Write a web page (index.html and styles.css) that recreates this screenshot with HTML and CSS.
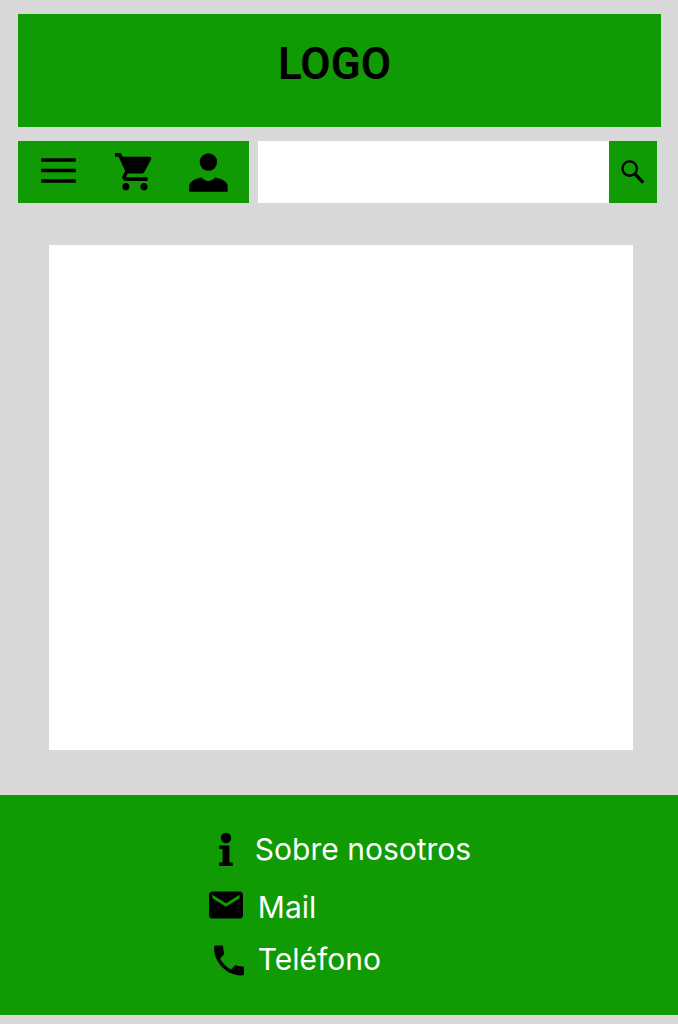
FILE: index.html
```html
<!DOCTYPE html>
<html lang="es">
<head>
<meta charset="utf-8">
<meta name="viewport" content="width=device-width, initial-scale=1">
<title>Inicio</title>
<link rel="stylesheet" href="styles.css">
</head>
<body>
<header class="header">
  <h1 class="banner">LOGO</h1>
  <div class="toolbar">
    <nav class="nav">
      <button class="icon-button" type="button" aria-label="Menú">
        <svg class="icon" viewBox="0 0 40 40"><path d="M3.200 5.200h34.600v3.600H3.200zM3.200 15.700h34.600v3.600H3.200zM3.200 26.200h34.600v3.600H3.200z"/></svg>
      </button>
      <button class="icon-button" type="button" aria-label="Carrito">
        <svg class="icon icon-cart" viewBox="1 2 20.400 19.800" preserveAspectRatio="none"><path d="M7 18c-1.100 0-1.990.9-1.990 2S5.900 22 7 22s2-.9 2-2-.9-2-2-2zM1 2v2h2l3.600 7.590-1.350 2.450c-.16.28-.25.61-.25.96 0 1.100.9 2 2 2h12v-2H7.420c-.14 0-.25-.11-.25-.25l.03-.12.9-1.630h7.450c.75 0 1.410-.41 1.750-1.030l3.580-6.490A1 1 0 0 0 20 4H5.210l-.94-2H1zm16 16c-1.100 0-1.990.9-1.990 2s.89 2 1.990 2 2-.9 2-2-.9-2-2-2z"/></svg>
      </button>
      <button class="icon-button" type="button" aria-label="Cuenta">
        <svg class="icon" viewBox="0.600 0 40 40"><circle cx="20" cy="9" r="8.700"/><path d="M.8 38.800v-6c0-4 6-7 12.400-8.200 2 2.200 4.200 3.400 6.800 3.400s4.800-1.200 6.800-3.400c6.400 1.200 12.400 4.200 12.400 8.200v6z"/></svg>
      </button>
    </nav>
    <form class="search" role="search">
      <input class="search-input" type="search" aria-label="Buscar">
      <button class="search-button" type="button" aria-label="Buscar">
        <svg class="search-icon" viewBox="0 0 32 32"><circle cx="12.700" cy="12.600" r="7.200" stroke-width="2.400"/><path d="M17.600 17.600l8.700 9" stroke-width="3.400"/></svg>
      </button>
    </form>
  </div>
</header>
<main class="content"></main>
<footer class="footer">
  <ul class="links">
    <li><a class="link" href="#nosotros">
      <svg class="link-icon" viewBox="0 0 34 34"><circle cx="17" cy="6" r="5.200"/><path d="M10.200 13.600h9.200q1 0 1 1v16h3.400v3.400H10.200v-3.400h3.400V17h-3.400z"/></svg>
      Sobre nosotros</a></li>
    <li><a class="link link-mail" href="#mail">
      <svg class="link-icon" viewBox="2 2 20 20"><path d="M20 4H4c-1.100 0-1.990.9-1.990 2L2 18c0 1.100.9 2 2 2h16c1.100 0 2-.9 2-2V6c0-1.100-.9-2-2-2zm0 4l-8 5-8-5V6l8 5 8-5v2z"/></svg>
      Mail</a></li>
    <li><a class="link link-phone" href="#telefono">
      <svg class="link-icon" viewBox="0 1.500 20.400 20.400"><path d="M6.620 10.790c1.440 2.830 3.760 5.140 6.590 6.590l2.200-2.200c.27-.27.67-.36 1.020-.24 1.120.37 2.330.57 3.570.57.55 0 1 .45 1 1V20c0 .55-.45 1-1 1-9.390 0-17-7.610-17-17 0-.55.45-1 1-1h3.500c.55 0 1 .45 1 1 0 1.250.2 2.450.57 3.570.11.35.03.74-.25 1.020l-2.200 2.200z"/></svg>
      Teléfono</a></li>
  </ul>
</footer>
</body>
</html>
```
FILE: styles.css
```css
* { box-sizing: border-box; }

body {
  margin: 0;
  background: #d9d9d9;
  color: #000;
  font-family: Inter, "Liberation Sans", sans-serif;
}

svg {
  display: block;
  fill: currentColor;
  overflow: visible;
}

button {
  border: 0;
  padding: 0;
  background: none;
  color: inherit;
  cursor: pointer;
}

.header { padding: 14px 17px 0 18px; }

.banner {
  display: flex;
  align-items: center;
  justify-content: center;
  min-height: 113px;
  margin: 0;
  padding: 0 10px 14px 0;
  background: #109a04;
  font-family: Roboto, "Liberation Sans", sans-serif;
  font-size: 44px;
  font-weight: 600;
}

.toolbar {
  display: flex;
  gap: 9px;
  margin: 14px 4px 0 0;
}

.nav {
  display: flex;
  flex: none;
  align-items: flex-start;
  gap: 37px;
  padding: 12px 20px 10px;
  background: #109a04;
}

.icon {
  width: 40px;
  height: 40px;
}

.icon-cart {
  width: 37px;
  height: 37px;
}

.search {
  display: flex;
  flex: 1;
  min-width: 0;
}

.search-input {
  flex: 1;
  min-width: 0;
  padding: 0 16px;
  border: 0;
  border-radius: 0;
  background: #fff;
  font: 24px Inter, sans-serif;
  appearance: none;
}

.search-button {
  display: grid;
  place-items: center;
  width: 48px;
  background: #109a04;
}

.search-icon {
  width: 32px;
  height: 32px;
  fill: none;
  stroke: currentColor;
}

.content {
  min-height: 505px;
  margin: 42px 45px 45px 49px;
  background: #fff;
}

.footer {
  display: flex;
  justify-content: center;
  padding: 36px 0 38px 2px;
  background: #109a04;
}

.links {
  display: grid;
  gap: 16px;
  margin: 0;
  padding: 0;
  list-style: none;
}

.link {
  display: flex;
  align-items: center;
  gap: 12px;
  color: #fff;
  font-size: 30px;
  line-height: 36px;
  text-decoration: none;
}

.link-icon {
  width: 34px;
  height: 34px;
  color: #000;
}

.link-mail {
  align-items: flex-start;
  gap: 15px;
  padding-top: 6px;
}

.link-mail .link-icon { margin-top: -1px; }

.link-phone {
  align-items: flex-end;
  gap: 15px;
}
```
